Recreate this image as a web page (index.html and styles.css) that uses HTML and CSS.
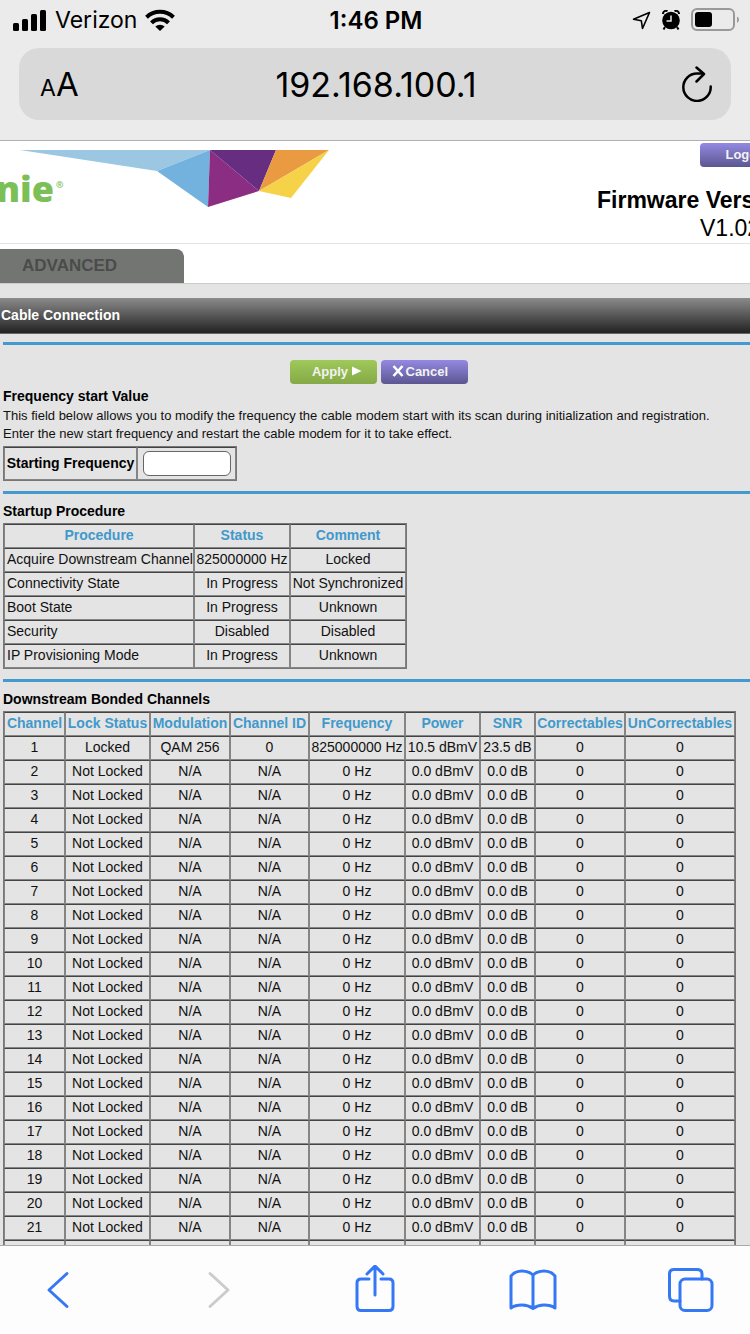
FILE: index.html
```html
<!DOCTYPE html>
<html lang="en">
<head>
    <meta charset="UTF-8">
    <meta name="viewport" content="width=device-width, initial-scale=1.0">
    <title>Cable Connection</title>
    <link rel="stylesheet" href="styles.css">
</head>
<body>
    <header class="browser-top">
        <div class="status-bar">
            <div class="status-left">
                <svg width="34" height="22" viewBox="0 0 34 22">
                    <rect x="0" y="14" width="6" height="8" rx="1.5"/>
                    <rect x="9" y="10" width="6" height="12" rx="1.5"/>
                    <rect x="18" y="5" width="6" height="17" rx="1.5"/>
                    <rect x="27" y="1" width="6" height="21" rx="1.5"/>
                </svg>
                <span class="carrier">Verizon</span>
                <svg width="30" height="22" viewBox="0 0 30 22">
                    <g fill="none" stroke="#000" stroke-width="4">
                        <path d="M1.500 8.300A19.500 19.500 0 0 1 28.500 8.300"/>
                        <path d="M6.500 13.800A12 12 0 0 1 23.500 13.800"/>
                    </g>
                    <path d="M15 22L10.300 17.600A7 7 0 0 1 19.700 17.600Z"/>
                </svg>
            </div>
            <div class="clock">1:46 PM</div>
            <div class="status-right">
                <svg width="19" height="19" viewBox="0 0 19 19">
                    <path d="M17.500 1.500L1.500 8.300L9.300 9.700L10.500 17.500Z" fill="none" stroke="#000" stroke-width="1.600" stroke-linejoin="round"/>
                </svg>
                <svg width="18" height="20" viewBox="0 0 18 20">
                    <circle cx="9" cy="10.500" r="8.800"/>
                    <path d="M1 4A3 3 0 0 1 5.500 1.200M12.500 1.200A3 3 0 0 1 17 4M3 17L1.500 19.500M15 17L16.500 19.500" fill="none" stroke="#000" stroke-width="2"/>
                    <path d="M9 5.500V11H4.500" fill="none" stroke="#ebebeb" stroke-width="1.500"/>
                </svg>
                <svg width="48" height="24" viewBox="0 0 48 24">
                    <rect x="1" y="1" width="42" height="21" rx="5" fill="none" stroke="#999" stroke-width="2"/>
                    <rect x="4" y="4" width="17" height="15" rx="3"/>
                    <path d="M46 8.500Q48 9.500 48 11.500T46 15Z" fill="#999"/>
                </svg>
            </div>
        </div>
        <div class="address-bar">
            <button class="text-size" type="button" aria-label="Text size"><small>A</small><span>A</span></button>
            <div class="address">192.168.100.1</div>
            <button class="reload" type="button" aria-label="Reload">
                <svg width="30" height="36" viewBox="0 0 30 36" fill="none" stroke="#000" stroke-width="2.500" stroke-linecap="round" stroke-linejoin="round">
                    <path d="M28.700 20.500A13.700 13.700 0 1 1 15 7.500H21"/>
                    <path d="M14.500 1.500L22 8L14.500 15.500"/>
                </svg>
            </button>
        </div>
    </header>

    <main class="page">
        <div class="banner">
            <svg class="logo" width="330" height="60" viewBox="0 0 330 60">
                <path d="M20 0H210L157 21Z" fill="#9bc7e3"/>
                <path d="M210 0L208 57L157 21Z" fill="#73b2df"/>
                <path d="M210 0L259 41L208 57Z" fill="#8c2d84"/>
                <path d="M210 0H276L259 41Z" fill="#662d81"/>
                <path d="M276 0H329L259 41Z" fill="#ea9a41"/>
                <path d="M329 0L291 48L259 41Z" fill="#f5d248"/>
                <text class="logo-name" x="-4" y="52">nie</text>
                <text class="logo-mark" x="56" y="38">®</text>
            </svg>
            <div class="firmware">
                <button class="btn purple logout" type="button">Logout</button>
                <strong>Firmware Version</strong>
                <span class="version">V1.02</span>
            </div>
        </div>

        <nav class="tabs">
            <a class="tab" href="#">ADVANCED</a>
        </nav>

        <h1 class="title">Cable Connection</h1>

        <form class="content">
            <section>
                <div class="actions">
                    <button class="btn green" type="button">Apply
                        <svg width="10" height="10" viewBox="0 0 10 10"><path d="M0 0.500L9.500 5L0 9.500Z" fill="#fff"/></svg>
                    </button>
                    <button class="btn purple cancel" type="button">
                        <svg width="12" height="12" viewBox="0 0 12 12"><path d="M1.500 1L10.500 11M10.500 1L1.500 11" stroke="#fff" stroke-width="2.600"/></svg>
                        Cancel</button>
                </div>
                <h2>Frequency start Value</h2>
                <p>This field below allows you to modify the frequency the cable modem start with its scan during initialization and registration.<br>
                Enter the new start frequency and restart the cable modem for it to take effect.</p>
                <table class="start">
                    <tr>
                        <th><label for="freq">Starting Frequency</label></th>
                        <td><input type="text" id="freq"></td>
                    </tr>
                </table>
            </section>

            <section>
                <h2>Startup Procedure</h2>
                <table class="procedure">
                    <colgroup><col class="w190"><col class="w96"><col class="w116"></colgroup>
                    <tr><th>Procedure</th><th>Status</th><th>Comment</th></tr>
                    <tr><td>Acquire Downstream Channel</td><td>825000000 Hz</td><td>Locked</td></tr>
                    <tr><td>Connectivity State</td><td>In Progress</td><td>Not Synchronized</td></tr>
                    <tr><td>Boot State</td><td>In Progress</td><td>Unknown</td></tr>
                    <tr><td>Security</td><td>Disabled</td><td>Disabled</td></tr>
                    <tr><td>IP Provisioning Mode</td><td>In Progress</td><td>Unknown</td></tr>
                </table>
            </section>

            <section>
                <h2>Downstream Bonded Channels</h2>
                <table class="channels">
                    <colgroup>
                        <col class="w61"><col class="w85"><col class="w80"><col class="w79"><col class="w96"><col class="w75"><col class="w55"><col class="w90"><col class="w110">
                    </colgroup>
                    <thead>
                        <tr><th>Channel</th><th>Lock Status</th><th>Modulation</th><th>Channel ID</th><th>Frequency</th><th>Power</th><th>SNR</th><th>Correctables</th><th>UnCorrectables</th></tr>
                    </thead>
                    <tbody id="channels">
                        <tr><td>1</td><td>Locked</td><td>QAM 256</td><td>0</td><td>825000000 Hz</td><td>10.5 dBmV</td><td>23.5 dB</td><td>0</td><td>0</td></tr>
                    </tbody>
                </table>
            </section>
        </form>
    </main>

    <nav class="toolbar">
        <button type="button" aria-label="Back">
            <svg width="50" height="50" viewBox="-6 0 50 50"><path d="M28 8.500L10 25L28 41.500"/></svg>
        </button>
        <button type="button" aria-label="Forward" disabled>
            <svg width="50" height="50" viewBox="-7 0 50 50"><path d="M12 8.500L30 25L12 41.500"/></svg>
        </button>
        <button type="button" aria-label="Share">
            <svg width="50" height="50" viewBox="-5 0 50 50"><path d="M14 14H6Q2 14 2 18V41Q2 45.500 6 45.500H34Q38 45.500 38 41V18Q38 14 34 14H26M20 30V1M12 9L20 1L28 9"/></svg>
        </button>
        <button type="button" aria-label="Bookmarks">
            <svg width="50" height="50" viewBox="0 0 50 50"><path d="M25 10Q21 6 14 6Q7 6 3 11V43Q7 40 14 40Q20 40 25 43.500Q30 40 36 40Q43 40 47 43V11Q43 6 36 6Q29 6 25 10ZV43"/></svg>
        </button>
        <button type="button" aria-label="Tabs">
            <svg width="50" height="50" viewBox="-2 0 50 50"><path d="M12 36H6Q1.500 36 1.500 31V9Q1.500 4.500 6 4.500H29Q34 4.500 34 9V14"/><rect x="12" y="14" width="32" height="31.500" rx="5"/></svg>
        </button>
    </nav>

    <script>
        // channels 2 and up are not locked
        const rows = document.getElementById('channels');
        for (let i = 2; i <= 22; i++) {
            const cells = [i, 'Not Locked', 'N/A', 'N/A', '0 Hz', '0.0 dBmV', '0.0 dB', 0, 0];
            rows.insertAdjacentHTML('beforeend', '<tr><td>' + cells.join('</td><td>') + '</td></tr>');
        }
    </script>
</body>
</html>
```

FILE: styles.css
```css
* {
    box-sizing: border-box;
}
body {
    margin: 0;
    height: 100vh;
    display: flex;
    flex-direction: column;
    overflow: hidden;
    font-family: "Liberation Sans", Arial, sans-serif;
    font-size: 14px;
    color: #111;
    background: #e4e4e4;
}
button {
    border: none;
    background: none;
    padding: 0;
    font-family: inherit;
    color: inherit;
    cursor: pointer;
}
svg {
    display: block;
}

/* browser chrome */
.browser-top {
    flex: none;
    padding: 0 19px 20px;
    background: #ebebeb;
    border-bottom: 1px solid #b0b0b0;
    font-family: Inter, sans-serif;
    color: #000;
}
.status-bar {
    display: grid;
    grid-template-columns: 1fr auto 1fr;
    align-items: center;
    height: 40px;
    margin: 0 -8px 8px -6px;
    font-size: 23px;
}
.status-left, .status-right {
    display: flex;
    align-items: center;
    gap: 8px;
}
.status-right {
    justify-content: flex-end;
    gap: 11px;
}
.clock {
    font-size: 24px;
    font-weight: 600;
}
.address-bar {
    display: grid;
    grid-template-columns: 1fr auto 1fr;
    align-items: center;
    height: 72px;
    padding: 0 19px 0 21px;
    border-radius: 20px;
    background: #d9d9d9;
}
.text-size {
    justify-self: start;
    font-size: 33px;
}
.text-size small {
    font-size: 23px;
}
.reload {
    justify-self: end;
}
.address {
    font-size: 34px;
}

/* modem page */
.page {
    flex: 1;
    min-height: 0;
    overflow: hidden;
}
.banner {
    display: flex;
    justify-content: space-between;
    height: 103px;
    background: #fff;
    border-bottom: 1px solid #e4e4e4;
}
.logo {
    margin-top: 9px;
}
.logo-name {
    font: 800 36px "Open Sans", sans-serif;
    fill: #7dbf57;
}
.logo-mark {
    font: bold 9px "Open Sans", sans-serif;
    fill: #7dbf57;
}
.firmware {
    width: 153px;
    padding-top: 2px;
    white-space: nowrap;
    font-size: 23px;
    line-height: 28px;
    color: #000;
}
.firmware strong {
    display: block;
    margin-top: 19px;
}
.version, .logout {
    margin-left: 103px;
}
.btn {
    display: flex;
    align-items: center;
    justify-content: center;
    gap: 4px;
    width: 87px;
    height: 24px;
    padding: 0 0 2px 8px;
    border-radius: 4px;
    font-size: 13px;
    font-weight: bold;
    color: #f2f2f2;
}
.purple {
    background: linear-gradient(#9489e2, #5c5690);
}
.green {
    background: linear-gradient(#9fc95a, #85a947);
}
.cancel {
    justify-content: flex-start;
    gap: 2px;
    padding-left: 11px;
}
.tabs {
    height: 40px;
    padding-top: 5px;
    background: #fff;
    border-bottom: 1px solid #ccc;
}
.tab {
    display: block;
    width: 184px;
    height: 34px;
    padding-left: 22px;
    border-radius: 0 8px 0 0;
    background: #737572;
    color: #4b4b4b;
    font-size: 17px;
    font-weight: bold;
    line-height: 34px;
    text-decoration: none;
}
.title {
    margin: 14px 0 8px;
    padding-left: 1px;
    height: 36px;
    background: linear-gradient(#8b8b8b, #222);
    border-bottom: 1px solid #666;
    color: #fff;
    font-size: 14px;
    line-height: 34px;
}
.content {
    padding-left: 3px;
}
section {
    border-top: 3px solid #4499cd;
    padding-bottom: 10px;
}
h2 {
    margin: 0;
    padding: 8px 0 3px;
    font-size: 14px;
    line-height: 18px;
    color: #000;
}
p {
    margin: 0 0 3px;
    font-size: 13px;
    line-height: 18px;
    white-space: nowrap;
}
.actions {
    display: flex;
    justify-content: center;
    gap: 4px;
    padding: 15px 0 0 4px;
}
.actions + h2 {
    padding: 3px 0 2px;
}

table {
    table-layout: fixed;
    border-spacing: 0;
    border: 1px solid #777;
    line-height: 18px;
}
th, td {
    height: 24px;
    padding: 0 0 2px;
    border: 1px solid #858585;
    border-top-color: #444;
    text-align: center;
    white-space: nowrap;
    font-size: 14px;
}
th {
    color: #4199cb;
}
.procedure {
    width: 404px;
}
.procedure td:first-child {
    text-align: left;
    padding-left: 2px;
}
.channels {
    width: 733px;
}
.start {
    width: 234px;
}
.start th {
    width: 133px;
    height: 33px;
    color: #000;
}
.start td {
    padding: 0;
}
.start input {
    display: block;
    width: 88px;
    height: 25px;
    margin: auto;
    border: 1px solid #666;
    border-radius: 6px;
    background: #fff;
}
.w55 { width: 55px; }
.w61 { width: 61px; }
.w75 { width: 75px; }
.w79 { width: 79px; }
.w80 { width: 80px; }
.w85 { width: 85px; }
.w90 { width: 90px; }
.w96 { width: 96px; }
.w110 { width: 110px; }
.w116 { width: 116px; }
.w190 { width: 190px; }

/* bottom toolbar */
.toolbar {
    flex: none;
    display: flex;
    justify-content: space-between;
    align-items: center;
    height: 89px;
    padding: 0 34px 0 33px;
    border-top: 1px solid #aaa;
    background: #fdfdfd;
}
.toolbar svg {
    fill: none;
    stroke: #3478f6;
    stroke-width: 3;
    stroke-linecap: round;
    stroke-linejoin: round;
}
.toolbar button:disabled svg {
    stroke: #ccc;
}
```
